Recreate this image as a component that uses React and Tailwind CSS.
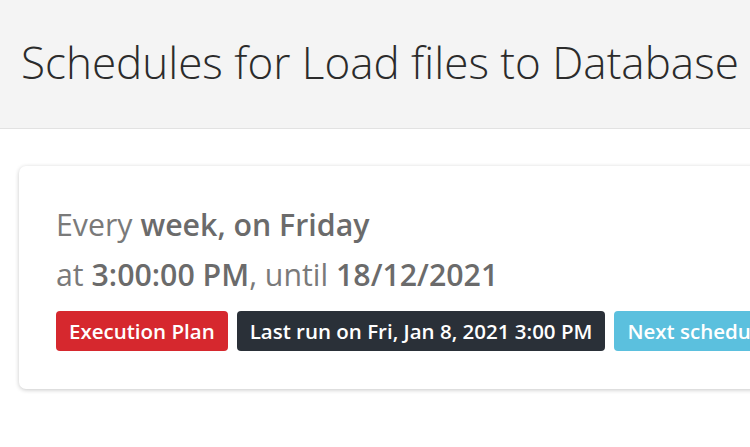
export default function App() {
  const font = { fontFamily: '"Open Sans", "Noto Sans", sans-serif' };
  return (
    <div className="w-[750px] h-[447px] overflow-hidden bg-white" style={font}>
      <div className="h-[129px] bg-[#f4f4f4] border-b border-[#e2e2e2] pl-[21px] pt-[40px]">
        <h1 className="text-[44px] font-light text-[#2b2b2b] whitespace-nowrap leading-[44px]">
          Schedules for Load files to Database
        </h1>
      </div>
      <div className="pl-[19px] pt-[37px]">
        <div className="w-[900px] h-[223px] bg-white rounded-[7px] shadow-[0_1px_4px_rgba(0,0,0,0.22)] pl-[37px] pt-[34px]">
          <div className="text-[30.3px] text-[#7a7a7a] leading-[50px] whitespace-nowrap">
            Every <span className="font-semibold text-[#6b6b6b]">week, on Friday</span>
          </div>
          <div className="text-[30.3px] text-[#7a7a7a] leading-[50px] whitespace-nowrap">
            at <span className="font-semibold text-[#6b6b6b]">3:00:00 PM</span>, until{' '}
            <span className="font-semibold text-[#6b6b6b]">18/12/2021</span>
          </div>
          <div className="flex gap-[9px] mt-[11px] whitespace-nowrap">
            <span className="h-[40px] flex items-center px-[13px] rounded-[4px] bg-[#d6282e] text-white text-[20.5px] font-semibold">
              Execution Plan
            </span>
            <span className="h-[40px] flex items-center px-[13px] rounded-[4px] bg-[#2a3038] text-white text-[20.5px] font-semibold">
              Last run on Fri, Jan 8, 2021 3:00 PM
            </span>
            <span className="h-[40px] flex items-center px-[13px] rounded-[4px] bg-[#5bc0de] text-white text-[20.5px] font-semibold">
              Next scheduled run on Fri, Jan 15, 2021 3:00 PM
            </span>
          </div>
        </div>
      </div>
    </div>
  );
}
